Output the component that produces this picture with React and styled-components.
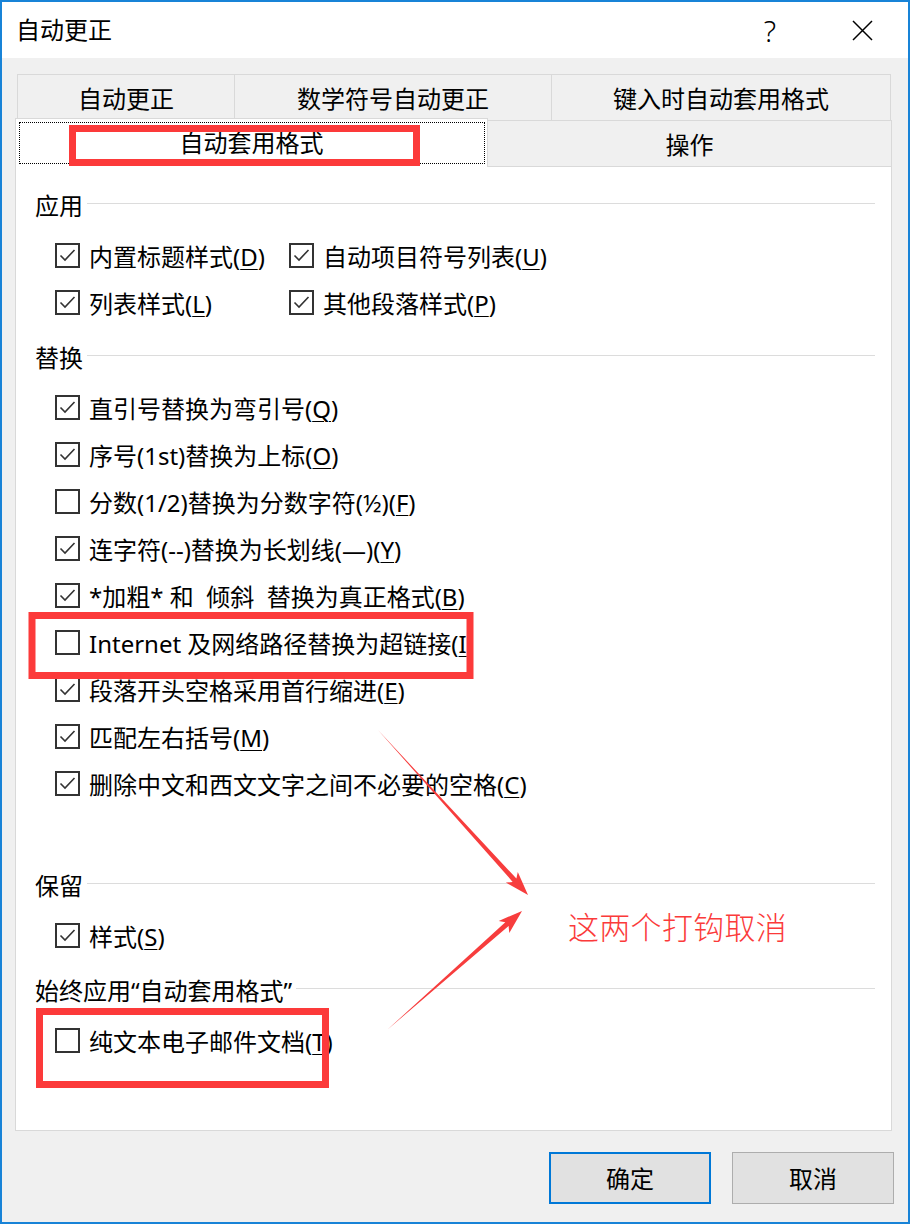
import React from "react";
import styled, { createGlobalStyle } from "styled-components";

const GlobalStyle = createGlobalStyle`
  html, body { margin: 0; padding: 0; background: #ffffff; }
  body {
    font-family: "Noto Sans", "Noto Sans CJK SC", sans-serif;
    color: #000;
  }
  * { box-sizing: border-box; }
`;

const FONT = `"Noto Sans", "Noto Sans CJK SC", sans-serif`;

const Window = styled.div`
  position: relative;
  width: 910px;
  height: 1224px;
  border: 2px solid #1883d7;
  background: #f0f0f0;
  display: flex;
  flex-direction: column;
  font-family: ${FONT};
  font-size: 24px;
`;

const TitleBar = styled.div`
  height: 56px;
  background: #ffffff;
  display: flex;
  align-items: center;
  flex-shrink: 0;
`;

const Title = styled.div`
  flex: 1;
  padding-left: 14px;
  font-family: "Noto Sans CJK SC", sans-serif;
  font-size: 24px;
  line-height: 1;
  margin-top: -2px;
`;

const TitleButton = styled.div`
  width: 92px;
  height: 56px;
  display: flex;
  align-items: center;
  justify-content: center;
  font-family: "Noto Sans", sans-serif;
  font-weight: 300;
  font-size: 29px;
  line-height: 1;
`;

const TabStrip = styled.div`
  margin: 16px 0 0 13px;
  width: 877px;
  display: flex;
  flex-direction: column;
`;

const TabRow = styled.div`
  display: flex;
  height: 46px;
  padding-left: ${(p) => p.$indent || 0}px;
  align-items: flex-start;
`;

const Tab = styled.div`
  flex: 0 0 ${(p) => p.$w}px;
  height: ${(p) => (p.$active ? 49 : 46)}px;
  margin-top: ${(p) => (p.$active ? -2 : 0)}px;
  margin-left: ${(p) => (p.$first ? 0 : -1)}px;
  background: ${(p) => (p.$active ? "#ffffff" : "#f0f0f0")};
  border: 1px solid #d9d9d9;
  border-bottom: none;
  position: relative;
  z-index: ${(p) => (p.$active ? 2 : 1)};
  display: flex;
  align-items: center;
  justify-content: center;
  font-family: "Noto Sans CJK SC", sans-serif;
  font-size: 24px;
  line-height: 1;
  padding-bottom: ${(p) => (p.$active ? 3 : 0)}px;
`;

const ActiveFocus = styled.span`
  position: absolute;
  left: 3px;
  right: 2px;
  top: 3px;
  bottom: 3px;
  border: 1px dotted #000;
`;

const Panel = styled.div`
  margin-left: 13px;
  width: 877px;
  height: 965px;
  flex-shrink: 0;
  background: #ffffff;
  border: 1px solid #d9d9d9;
  padding: 22px 16px 0 19px;
  display: flex;
  flex-direction: column;
`;

const Section = styled.div`
  display: flex;
  flex-direction: column;
  margin-top: ${(p) => (p.$first ? 0 : 14)}px;
`;

const Heading = styled.div`
  height: 34px;
  display: flex;
  align-items: center;
  font-size: 24px;
  line-height: 1;
  white-space: nowrap;

  &::after {
    content: "";
    flex: 1;
    height: 1px;
    background: #dcdcdc;
    margin-left: 4px;
    margin-bottom: 6px;
  }
`;

const List = styled.div`
  margin-top: 10px;
  padding-left: 20px;
  display: grid;
  grid-template-columns: ${(p) => (p.$cols ? "234px auto" : "auto")};
  grid-auto-rows: 47px;
`;

const Row = styled.div`
  display: flex;
  align-items: center;
  gap: 9px;
  height: 47px;
`;

const Box = styled.span`
  width: 25px;
  height: 25px;
  flex-shrink: 0;
  border: 2px solid #333333;
  background: #ffffff;
  display: inline-flex;
  align-items: center;
  justify-content: center;
  margin-top: -2px;
`;

const Label = styled.span`
  font-size: 24px;
  line-height: 1.25;
  white-space: nowrap;

  u {
    text-decoration-thickness: 1px;
    text-underline-offset: 3px;
  }
`;

const Footer = styled.div`
  display: flex;
  justify-content: flex-end;
  gap: 21px;
  padding: 21px 14px 0 0;
`;

const Button = styled.div`
  width: 162px;
  height: 52px;
  background: #e1e1e1;
  border: ${(p) => (p.$default ? "2px solid #0078d7" : "1px solid #adadad")};
  display: flex;
  align-items: center;
  justify-content: center;
  font-family: "Noto Sans CJK SC", sans-serif;
  font-size: 24px;
  line-height: 1;
`;

const Overlay = styled.svg`
  position: absolute;
  left: -2px;
  top: -2px;
  width: 910px;
  height: 1224px;
  pointer-events: none;
  z-index: 5;
`;

const Note = styled.div`
  position: absolute;
  left: 566px;
  top: 904px;
  font-family: "Noto Sans CJK SC", serif;
  font-weight: 300;
  font-size: 31px;
  line-height: 40px;
  color: #fb3a3a;
  letter-spacing: 0.3px;
  z-index: 6;
`;

const CheckBox = ({ checked }) => (
  <Box>
    {checked && (
      <svg width="21" height="21" viewBox="0 0 21 21">
        <polyline
          points="3.5,10.5 8,15 17.5,5"
          fill="none"
          stroke="#333"
          strokeWidth="1.6"
        />
      </svg>
    )}
  </Box>
);

const Item = ({ checked, text, keyChar, after = ")" }) => (
  <Row>
    <CheckBox checked={checked} />
    <Label>
      {text}(<u>{keyChar}</u>
      {after}
    </Label>
  </Row>
);

const replaceItems = [
  { checked: true, text: "直引号替换为弯引号", keyChar: "Q" },
  { checked: true, text: "序号(1st)替换为上标", keyChar: "O" },
  { checked: false, text: "分数(1/2)替换为分数字符(½)", keyChar: "F" },
  { checked: true, text: "连字符(--)替换为长划线(—)", keyChar: "Y" },
  { checked: true, text: "*加粗* 和 \u00a0倾斜\u00a0 替换为真正格式", keyChar: "B" },
  { checked: false, text: "Internet 及网络路径替换为超链接", keyChar: "I", after: "" },
  { checked: true, text: "段落开头空格采用首行缩进", keyChar: "E" },
  { checked: true, text: "匹配左右括号", keyChar: "M" },
  { checked: true, text: "删除中文和西文文字之间不必要的空格", keyChar: "C" },
];

const arrow = (tail, tip, head = 24, shaft = 2.5, wing = 8) => {
  const dx = tip[0] - tail[0];
  const dy = tip[1] - tail[1];
  const len = Math.hypot(dx, dy);
  const ux = dx / len;
  const uy = dy / len;
  const nx = -uy;
  const ny = ux;
  const B = [tip[0] - head * ux, tip[1] - head * uy];
  const S = [tip[0] - (head - 4) * ux, tip[1] - (head - 4) * uy];
  const pts = [
    tail,
    [S[0] + shaft * nx, S[1] + shaft * ny],
    [B[0] + wing * nx, B[1] + wing * ny],
    tip,
    [B[0] - wing * nx, B[1] - wing * ny],
    [S[0] - shaft * nx, S[1] - shaft * ny],
  ];
  return pts.map((p) => p.map((v) => v.toFixed(1)).join(",")).join(" ");
};

export default function App() {
  return (
    <>
      <GlobalStyle />
      <Window>
        <TitleBar>
          <Title>自动更正</Title>
          <TitleButton>?</TitleButton>
          <TitleButton>
            <svg width="21" height="21" viewBox="0 0 21 21">
              <path d="M1 1 L20 20 M20 1 L1 20" stroke="#000" strokeWidth="1.5" fill="none" />
            </svg>
          </TitleButton>
        </TitleBar>

        <TabStrip>
          <TabRow $indent={2}>
            <Tab $w={218} $first>自动更正</Tab>
            <Tab $w={318}>数学符号自动更正</Tab>
            <Tab $w={340}>键入时自动套用格式</Tab>
          </TabRow>
          <TabRow>
            <Tab $w={473} $first $active>
              <ActiveFocus />
              自动套用格式
            </Tab>
            <Tab $w={405}>操作</Tab>
          </TabRow>
        </TabStrip>

        <Panel>
          <Section $first>
            <Heading>应用</Heading>
            <List $cols>
              <Item checked text="内置标题样式" keyChar="D" />
              <Item checked text="自动项目符号列表" keyChar="U" />
              <Item checked text="列表样式" keyChar="L" />
              <Item checked text="其他段落样式" keyChar="P" />
            </List>
          </Section>

          <Section>
            <Heading>替换</Heading>
            <List>
              {replaceItems.map((it) => (
                <Item key={it.keyChar} {...it} />
              ))}
              <Row />
            </List>
          </Section>

          <Section>
            <Heading>保留</Heading>
            <List>
              <Item checked text="样式" keyChar="S" />
            </List>
          </Section>

          <Section>
            <Heading>始终应用“自动套用格式”</Heading>
            <List>
              <Item checked={false} text="纯文本电子邮件文档" keyChar="T" />
            </List>
          </Section>
        </Panel>

        <Footer>
          <Button $default>确定</Button>
          <Button>取消</Button>
        </Footer>

        <Overlay viewBox="0 0 910 1224">
          <g fill="none" stroke="#fc3a3a" strokeWidth="7">
            <rect x="72.5" y="128.5" width="344" height="34" />
            <rect x="32" y="615.5" width="438" height="60" />
            <rect x="39.5" y="1011.5" width="286" height="73" />
          </g>
          <g fill="#f73d3d">
            <polygon points={arrow([378, 730], [528, 895])} />
            <polygon points={arrow([387, 1030], [522, 911])} />
          </g>
        </Overlay>
        <Note>这两个打钩取消</Note>
      </Window>
    </>
  );
}
